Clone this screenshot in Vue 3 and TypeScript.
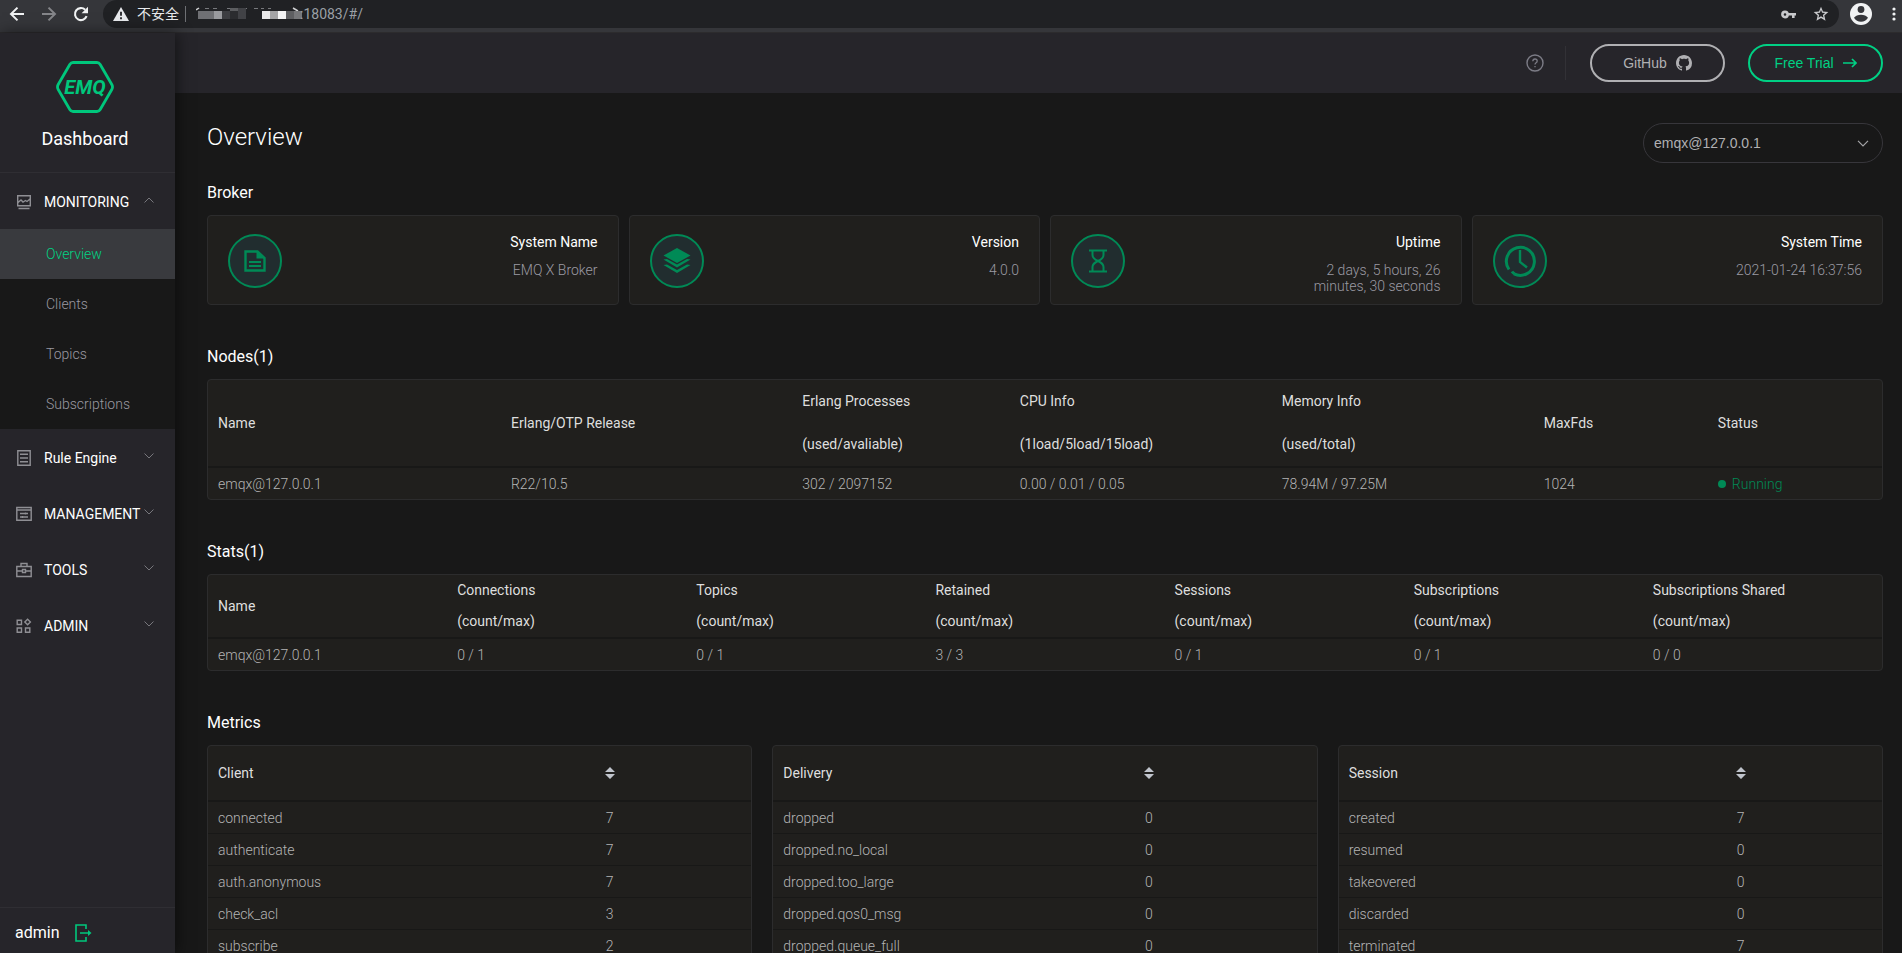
<script setup lang="ts">
import { ref } from 'vue'

interface MenuGroup {
  label: string
  icon: string
  open: boolean
  children: string[]
}

interface Column {
  lines: string[]
  width: string
}

interface Metric {
  title: string
  nameWidth: string
  rows: [string, number][]
}

const address = ref(':18083/#/')
const node = ref('emqx@127.0.0.1')

const menu: MenuGroup[] = [
  { label: 'MONITORING', icon: 'monitor', open: true, children: ['Overview', 'Clients', 'Topics', 'Subscriptions'] },
  { label: 'Rule Engine', icon: 'rules', open: false, children: [] },
  { label: 'MANAGEMENT', icon: 'manage', open: false, children: [] },
  { label: 'TOOLS', icon: 'tools', open: false, children: [] },
  { label: 'ADMIN', icon: 'admin', open: false, children: [] },
]

const broker = [
  { title: 'System Name', value: 'EMQ X Broker', icon: 'doc' },
  { title: 'Version', value: '4.0.0', icon: 'layers' },
  { title: 'Uptime', value: '2 days, 5 hours, 26 minutes, 30 seconds', icon: 'hourglass' },
  { title: 'System Time', value: '2021-01-24 16:37:56', icon: 'clock' },
]

const nodeColumns: Column[] = [
  { lines: ['Name'], width: '17.5%' },
  { lines: ['Erlang/OTP Release'], width: '17.4%' },
  { lines: ['Erlang Processes', '(used/avaliable)'], width: '13%' },
  { lines: ['CPU Info', '(1load/5load/15load)'], width: '15.65%' },
  { lines: ['Memory Info', '(used/total)'], width: '15.65%' },
  { lines: ['MaxFds'], width: '10.4%' },
  { lines: ['Status'], width: '10.4%' },
]
const nodeRow = ['emqx@127.0.0.1', 'R22/10.5', '302 / 2097152', '0.00 / 0.01 / 0.05', '78.94M / 97.25M', '1024']

const statColumns: string[][] = [
  ['Name'],
  ['Connections', '(count/max)'],
  ['Topics', '(count/max)'],
  ['Retained', '(count/max)'],
  ['Sessions', '(count/max)'],
  ['Subscriptions', '(count/max)'],
  ['Subscriptions Shared', '(count/max)'],
]
const statRow = ['emqx@127.0.0.1', '0 / 1', '0 / 1', '3 / 3', '0 / 1', '0 / 1', '0 / 0']

const metrics: Metric[] = [
  {
    title: 'Client',
    nameWidth: '47.8%',
    rows: [['connected', 7], ['authenticate', 7], ['auth.anonymous', 7], ['check_acl', 3], ['subscribe', 2]],
  },
  {
    title: 'Delivery',
    nameWidth: '38.2%',
    rows: [['dropped', 0], ['dropped.no_local', 0], ['dropped.too_large', 0], ['dropped.qos0_msg', 0], ['dropped.queue_full', 0]],
  },
  {
    title: 'Session',
    nameWidth: '48%',
    rows: [['created', 7], ['resumed', 0], ['takeovered', 0], ['discarded', 0], ['terminated', 7]],
  },
]
</script>

<template>
  <div class="window">
    <header class="browser">
      <button class="nav-btn" aria-label="Back">
        <svg width="16" height="16" viewBox="0 0 16 16" fill="none" stroke="#f1f3f4" stroke-width="2"><path d="M15 8H2.500M8.500 1.600 2 8l6.500 6.400" /></svg>
      </button>
      <button class="nav-btn" aria-label="Forward">
        <svg width="16" height="16" viewBox="0 0 16 16" fill="none" stroke="#85868a" stroke-width="2"><path d="M1 8h12.500M7.500 1.600 14 8l-6.500 6.400" /></svg>
      </button>
      <button class="nav-btn" aria-label="Reload">
        <svg width="16" height="16" viewBox="0 0 16 16"><path d="M13.600 10.200A6 6 0 1 1 12.200 3.800" fill="none" stroke="#f1f3f4" stroke-width="2.100" /><path d="M15 .8v6.400H8.600z" fill="#f1f3f4" /></svg>
      </button>
      <div class="omnibox">
        <svg width="16" height="14" viewBox="0 0 16 14"><path d="M8 0 16 14H0z" fill="#e8eaed" /><path d="M8 4.800v4M8 10.200v2" stroke="#202124" stroke-width="1.800" /></svg>
        <span class="insecure">不安全</span>
        <span class="bar-split"></span>
        <svg class="masked" width="106" height="14" viewBox="0 0 106 14" aria-hidden="true">
          <path d="M0 3 3 1" stroke="#d0d1d3" stroke-width="1.500" fill="none" />
          <path d="M9 1.500h4M17 1.500h4M31 1.500h3M50 1.500h1M58 1.500h4M65 1.500h3M72 1.500h3" stroke="#77787c" stroke-width="1" fill="none" />
          <path d="m97 1 5 3" stroke="#d0d1d3" stroke-width="1.500" fill="none" />
          <path fill="#6f7074" d="M2 4h16v8H2z" /><path fill="#999a9e" d="M18 4h8v8h-8z" /><path fill="#3c3d41" d="M26 4h8v8h-8z" />
          <path fill="#5c5d60" d="M34 1h8v3h-8z" /><path fill="#2b2c2f" d="M34 4h8v8h-8z" /><path fill="#414246" d="M42 1h8v11h-8z" />
          <path fill="#e9e9ea" d="M66 4h8v8h-8z" /><path fill="#a4a4a6" d="M74 4h8v8h-8z" /><path fill="#f4f4f5" d="M82 4h8v8h-8z" />
          <path fill="#5e5f62" d="M90 4h8v8h-8z" /><path fill="#76777a" d="M98 4h8v8h-8z" />
        </svg>
        <input v-model="address" class="address" type="text" aria-label="Address" />
        <button class="bar-icon" aria-label="Saved password">
          <svg width="15" height="9" viewBox="0 0 15 9" fill="none" stroke="#c8c9cc"><circle cx="4" cy="4.500" r="2.600" stroke-width="2.600" /><path d="M7 4.200h8M12.300 4.500V8" stroke-width="2.600" /></svg>
        </button>
        <button class="bar-icon" aria-label="Bookmark">
          <svg width="16" height="16" viewBox="0 0 24 24"><path fill="#c8c9cc" d="m23 9-8-.7L12 1 9 8.300 1 9l6 5.300L5.200 22 12 17.900 18.800 22 17 14.300zM12 15.400l-3.800 2.300 1-4.300-3.300-2.900 4.400-.4L12 6.100l1.700 4 4.400.4-3.300 2.900 1 4.300z" /></svg>
        </button>
      </div>
      <button class="profile" aria-label="Profile">
        <svg width="22" height="22" viewBox="0 0 22 22"><circle cx="11" cy="11" r="11" fill="#f1f3f4" /><circle cx="11" cy="6.500" r="3.400" fill="#35363a" /><path d="M4 14.800C5.500 12.700 8 11.800 11 11.800s5.500.9 7 3c-1.600 2.500-4 3.900-7 3.900s-5.400-1.400-7-3.900z" fill="#35363a" /></svg>
      </button>
      <button class="more" aria-label="Menu">
        <svg width="4" height="14" viewBox="0 0 4 14" fill="#f1f3f4"><circle cx="2" cy="2" r="1.600" /><circle cx="2" cy="7" r="1.600" /><circle cx="2" cy="12" r="1.600" /></svg>
      </button>
    </header>

    <div class="app">
      <aside class="sidebar">
        <div class="brand">
          <svg width="58" height="52" viewBox="0 0 58 52">
            <path d="M17 1.500h24q2 0 3.200 2L55.800 23.500q1.400 2.500 0 5L44.200 48.500q-1.200 2-3.200 2H17q-2 0-3.200-2L2.200 28.500q-1.400-2.500 0-5L13.800 3.500q1.200-2 3.200-2z" fill="none" stroke="#00c77c" stroke-width="2.800" />
            <text x="29" y="33" text-anchor="middle" class="logo-text">EMQ</text>
          </svg>
          <span class="brand-name">Dashboard</span>
        </div>
        <nav class="menu">
          <div v-for="group in menu" :key="group.label">
            <button class="group" :aria-expanded="group.open">
              <svg v-if="group.icon === 'monitor'" class="gicon" width="16" height="16" viewBox="0 0 16 16"><path d="M1.700 1.700h12.600v10H1.700zM2 8.500l3-2.500 2 2 2.500-1.500 1.500 1 3-2.500M2.500 14.500h11" /></svg>
              <svg v-else-if="group.icon === 'rules'" class="gicon" width="16" height="16" viewBox="0 0 16 16"><path d="M1.800.8h12.400v14.400H1.800zM4 4.300h8M4 8h8M4 11.700h8" /></svg>
              <svg v-else-if="group.icon === 'manage'" class="gicon" width="16" height="16" viewBox="0 0 16 16"><path d="M.8 1.500h14.400v12.700H.8zM1 4h14M4 7.500h8M4 11h8M9.500 6.500v2M6.500 10v2" /></svg>
              <svg v-else-if="group.icon === 'tools'" class="gicon" width="16" height="16" viewBox="0 0 16 16"><path d="M.8 4.500h14.400v10H.8zM5 4V1.500h6V4M1 9h5M10 9h5M6.500 7.500h3v3h-3z" /></svg>
              <svg v-else class="gicon" width="16" height="16" viewBox="0 0 16 16"><path d="M1.200 2.200h4.300v4.300H1.200zM1.200 10h4.300v4.300H1.200zM9.500 10h4.300v4.300H9.500zM11.600 1.200l2.800 2.800-2.800 2.800L8.800 4z" /></svg>
              <span class="group-label">{{ group.label }}</span>
              <svg class="caret" width="10" height="6" viewBox="0 0 10 6"><path :d="group.open ? 'M.5 5.500 5 1l4.500 4.500' : 'M.5.5 5 5 9.500.5'" /></svg>
            </button>
            <div v-if="group.open" class="submenu">
              <a v-for="(item, i) in group.children" :key="item" href="#/" :class="['sub', { active: i === 0 }]">{{ item }}</a>
            </div>
          </div>
        </nav>
        <div class="user">
          <span>admin</span>
          <button aria-label="Log out">
            <svg width="17" height="18" viewBox="0 0 17 18" fill="none" stroke="#00c77c" stroke-width="1.600"><path d="M11 5V1H1v16h10v-4M5 9h9" /><path d="m13 6 3.500 3-3.500 3z" fill="#00c77c" stroke="none" /></svg>
          </button>
        </div>
      </aside>

      <div class="main">
        <div class="topbar">
          <button class="help" aria-label="Help">
            <svg width="18" height="18" viewBox="0 0 18 18"><circle cx="9" cy="9" r="8" fill="none" stroke="#7c7c86" stroke-width="1.400" /><path d="M6.800 7.300Q6.900 5 9 5t2.200 2Q11.200 8.200 9.800 9 9 9.500 9 10.600M9 12v1.300" fill="none" stroke="#7c7c86" stroke-width="1.300" /></svg>
          </button>
          <span class="split"></span>
          <a class="pill" href="#github">
            GitHub
            <svg width="16" height="16" viewBox="0 0 16 16"><path fill="currentColor" d="M8 0C3.580 0 0 3.580 0 8c0 3.540 2.290 6.530 5.470 7.590.4.070.55-.17.55-.38 0-.19-.01-.82-.01-1.490-2.010.37-2.530-.49-2.690-.94-.09-.23-.48-.94-.82-1.130-.28-.15-.68-.52-.01-.53.630-.01 1.080.58 1.230.82.720 1.210 1.870.87 2.330.66.070-.52.280-.87.510-1.070-1.780-.2-3.640-.89-3.640-3.950 0-.87.310-1.590.82-2.150-.08-.2-.36-1.020.08-2.120 0 0 .67-.21 2.200.82.640-.18 1.320-.27 2-.27s1.360.09 2 .27c1.530-1.040 2.200-.82 2.200-.82.440 1.100.16 1.920.08 2.120.510.56.82 1.270.82 2.150 0 3.070-1.870 3.750-3.650 3.950.290.25.540.73.540 1.480 0 1.070-.01 1.930-.01 2.200 0 .21.150.46.550.38A8.010 8.010 0 0 0 16 8c0-4.420-3.580-8-8-8z" /></svg>
          </a>
          <a class="pill trial" href="#trial">
            Free Trial
            <svg width="14" height="10" viewBox="0 0 14 10" fill="none" stroke="currentColor" stroke-width="1.700"><path d="M0 5h13M9 1l4 4-4 4" /></svg>
          </a>
        </div>

        <main class="content">
          <div class="page-head">
            <h1>Overview</h1>
            <label class="node-select">
              <select v-model="node" aria-label="Node">
                <option>emqx@127.0.0.1</option>
              </select>
              <svg width="12" height="7" viewBox="0 0 12 7" fill="none" stroke="#a5a5a8" stroke-width="1.200"><path d="m1 .8 5 5 5-5" /></svg>
            </label>
          </div>

          <section>
            <h2>Broker</h2>
            <div class="cards">
              <div v-for="card in broker" :key="card.title" class="card">
                <span class="badge">
                  <svg v-if="card.icon === 'doc'" width="22" height="22" viewBox="0 0 22 22"><path d="M1.500 1.500h12l7 6.500v12.500h-19z" fill="none" stroke="#008a56" stroke-width="2.400" /><path d="M12.500 1v7.500H21zM5 11h12v2H5zM5 15h12v2H5z" fill="#008a56" /></svg>
                  <svg v-else-if="card.icon === 'layers'" width="28" height="26" viewBox="0 0 28 26" fill="#008a56"><path d="m14 0 13.500 7.500L14 15 .5 7.500z" /><path d="M.5 11.500 4 11l10 5.500L24 11l3.500.5L14 19.500zM.5 17 4 16.500l10 5.500 10-5.500 3.500.5L14 25z" /></svg>
                  <svg v-else-if="card.icon === 'hourglass'" width="20" height="24" viewBox="0 0 20 24" fill="none" stroke="#008a56" stroke-width="2"><path d="M1 1.500h18M1 22.500h18M4.500 2v4q0 3.500 5.500 6-5.500 2.500-5.500 6v4M15.500 2v4q0 3.500-5.500 6 5.500 2.500 5.500 6v4" /></svg>
                  <svg v-else width="32" height="32" viewBox="0 0 32 32" fill="none" stroke="#008a56" stroke-width="3"><path d="M5 24.500A14 14 0 1 1 10 28.800" /><path d="M16 5v12l7 5.500" stroke-width="2.400" /><path d="M8 26.500q1 1.500 2.500 2.300" /></svg>
                </span>
                <div class="card-text">
                  <div class="card-title">{{ card.title }}</div>
                  <div class="card-value">{{ card.value }}</div>
                </div>
              </div>
            </div>
          </section>

          <section>
            <h2>Nodes(1)</h2>
            <div class="panel">
              <table class="nodes">
                <colgroup><col v-for="c in nodeColumns" :key="c.lines[0]" :style="{ width: c.width }" /></colgroup>
                <thead>
                  <tr><th v-for="c in nodeColumns" :key="c.lines[0]"><div v-for="l in c.lines" :key="l">{{ l }}</div></th></tr>
                </thead>
                <tbody>
                  <tr>
                    <td v-for="v in nodeRow" :key="v">{{ v }}</td>
                    <td><span class="running">Running</span></td>
                  </tr>
                </tbody>
              </table>
            </div>
          </section>

          <section>
            <h2>Stats(1)</h2>
            <div class="panel">
              <table class="stats">
                <thead>
                  <tr><th v-for="c in statColumns" :key="c[0]"><div v-for="l in c" :key="l">{{ l }}</div></th></tr>
                </thead>
                <tbody>
                  <tr><td v-for="(v, i) in statRow" :key="i">{{ v }}</td></tr>
                </tbody>
              </table>
            </div>
          </section>

          <section>
            <h2>Metrics</h2>
            <div class="metrics">
              <div v-for="m in metrics" :key="m.title" class="panel">
                <table>
                  <colgroup><col :style="{ width: m.nameWidth }" /><col /></colgroup>
                  <thead>
                    <tr>
                      <th>{{ m.title }}</th>
                      <th class="num">
                        <button class="sort" :aria-label="'Sort ' + m.title">
                          <svg width="10" height="12" viewBox="0 0 10 12" fill="#c0c4cc"><path d="M5 0l5 5H0zM0 7h10l-5 5z" /></svg>
                        </button>
                      </th>
                    </tr>
                  </thead>
                  <tbody>
                    <tr v-for="r in m.rows" :key="r[0]"><td>{{ r[0] }}</td><td class="num">{{ r[1] }}</td></tr>
                  </tbody>
                </table>
              </div>
            </div>
          </section>
        </main>
      </div>
    </div>
  </div>
</template>

<style>
body {
  background: #181818;
}
</style>

<style scoped>
* {
  box-sizing: border-box;
}
.window {
  display: flex;
  flex-direction: column;
  height: 100vh;
  overflow: hidden;
  background: #181818;
  color: #fff;
  font: 400 14px/16px Roboto, "Noto Sans CJK SC", sans-serif;
}
button {
  display: flex;
  align-items: center;
  padding: 0;
  border: 0;
  background: none;
  color: inherit;
  font: inherit;
}
a {
  color: inherit;
  text-decoration: none;
}
svg {
  display: block;
  flex: none;
}

.browser {
  display: flex;
  flex: none;
  align-items: center;
  height: 33px;
  padding: 0 6px 4px 9px;
  border-bottom: 1px solid #2c2b2d;
  background: #35363a;
}
.nav-btn {
  margin-right: 16px;
}
.nav-btn:nth-child(3) {
  margin-right: 14px;
}
.omnibox {
  display: flex;
  flex: 1;
  align-items: center;
  height: 28px;
  margin-right: 11px;
  padding: 0 10px;
  border-radius: 14px;
  background: #202124;
}
.insecure {
  margin-left: 8px;
  color: #e8eaed;
}
.bar-split {
  width: 1px;
  height: 16px;
  margin: 0 10px 0 6px;
  background: #6e7074;
}
.address {
  flex: 1;
  min-width: 0;
  height: 20px;
  padding: 0;
  border: 0;
  outline: 0;
  background: none;
  color: #9aa0a6;
  font: inherit;
}
.masked {
  margin-right: -2px;
}
.bar-icon {
  margin-left: 17px;
}
.profile {
  margin-right: 20px;
}

.app {
  display: flex;
  flex: 1;
  min-height: 0;
}
.sidebar {
  z-index: 1;
  display: flex;
  flex: none;
  flex-direction: column;
  width: 175px;
  background: #26252a;
  box-shadow: 2px 0 14px rgba(0, 0, 0, 0.5);
}
.brand {
  display: flex;
  flex-direction: column;
  align-items: center;
  gap: 15px;
  height: 140px;
  padding: 28px 5px 0 0;
  border-bottom: 1px solid #2f2e33;
}
.logo-text {
  fill: #00c77c;
  font: italic 700 20px Roboto, sans-serif;
}
.brand-name {
  font-size: 18px;
  line-height: 22px;
}
.menu {
  flex: 1;
}
.group {
  width: 100%;
  height: 56px;
  padding: 2px 21px 0 16px;
  text-align: left;
}
.gicon {
  fill: none;
  stroke: #8f8f94;
  stroke-width: 1.4;
}
.group-label {
  flex: 1;
  margin-left: 12px;
}
.caret {
  margin-bottom: 4px;
  fill: none;
  stroke: #77777c;
}
.submenu {
  background: #181818;
}
.sub {
  display: block;
  padding-left: 46px;
  color: #9a99a1;
  font-weight: 300;
  line-height: 50px;
}
.sub.active {
  background: #393a3e;
  color: #00d484;
}
.user {
  display: flex;
  align-items: center;
  gap: 16px;
  height: 46px;
  padding: 5px 0 0 15px;
  border-top: 1px solid #2f2e33;
  font-size: 16px;
}

.main {
  flex: 1;
  min-width: 0;
  overflow: hidden;
}
.topbar {
  display: flex;
  align-items: center;
  justify-content: flex-end;
  height: 60px;
  padding: 0 19px 0 32px;
  background: #26252a;
}
.split {
  width: 1px;
  height: 34px;
  margin: 0 24px 0 21px;
  background: #323136;
}
.pill {
  display: flex;
  align-items: center;
  justify-content: center;
  gap: 9px;
  width: 135px;
  height: 38px;
  border: 2px solid #b0b0b3;
  border-radius: 19px;
  color: #b0b0b3;
  font-family: "Liberation Sans", Arial, sans-serif;
}
.trial {
  margin-left: 23px;
  border-color: #00d084;
  color: #00d084;
}

.content {
  padding: 30px 19px 0 32px;
}
.page-head {
  display: flex;
  justify-content: space-between;
  height: 60px;
}
h1,
h2 {
  margin: 0;
  font-weight: 400;
}
h1 {
  font-size: 24px;
  font-weight: 300;
  line-height: 28px;
}
h2 {
  margin-bottom: 12px;
  font-size: 16px;
  line-height: 20px;
}
.node-select {
  display: flex;
  align-items: center;
  width: 240px;
  height: 40px;
  padding-right: 13px;
  border: 1px solid #37363b;
  border-radius: 20px;
}
.node-select select {
  flex: 1;
  height: 38px;
  padding: 0 0 0 10px;
  border: 0;
  outline: 0;
  appearance: none;
  background: none;
  color: #b0b0b3;
  font: 14px "Liberation Sans", Arial, sans-serif;
}
section {
  margin-bottom: 42px;
}
.cards {
  display: grid;
  grid-template-columns: repeat(4, 1fr);
  gap: 10px;
}
.card,
.panel {
  border: 1px solid #2c2c2d;
  border-radius: 4px;
  background: #201f1d;
}
.card {
  display: flex;
  justify-content: space-between;
  height: 90px;
  padding: 18px 20px 0;
}
.badge {
  display: flex;
  align-items: center;
  justify-content: center;
  width: 54px;
  height: 54px;
  border: 2px solid #008a56;
  border-radius: 50%;
  background: #212d2f;
}
.card-text {
  max-width: 140px;
  text-align: right;
}
.card-title {
  margin-bottom: 12px;
}
.card-value {
  color: #9b9aa3;
  font-weight: 300;
}

.panel {
  overflow: hidden;
}
table {
  width: 100%;
  border-collapse: separate;
  border-spacing: 0;
  table-layout: fixed;
}
th,
td {
  height: 32px;
  padding: 0 10px;
  border-bottom: 1px solid #181817;
  text-align: left;
}
th {
  height: 56px;
  border-bottom-width: 2px;
  color: #dedede;
  font-weight: 400;
}
td {
  color: #b4b4b4;
  font-weight: 300;
}
.nodes th {
  height: 88px;
  line-height: 43px;
}
.stats th {
  height: 64px;
  line-height: 31px;
}
.nodes td,
.stats td {
  height: 31px;
  border-bottom: 0;
}
.running {
  display: flex;
  align-items: center;
  gap: 6px;
  color: #008a56;
}
.running::before {
  width: 8px;
  height: 8px;
  border-radius: 50%;
  background: #008a56;
  content: "";
}
.metrics {
  display: grid;
  grid-template-columns: repeat(3, 1fr);
  gap: 20px;
}
.num {
  text-align: center;
}
.sort {
  margin: 0 auto;
}
</style>
